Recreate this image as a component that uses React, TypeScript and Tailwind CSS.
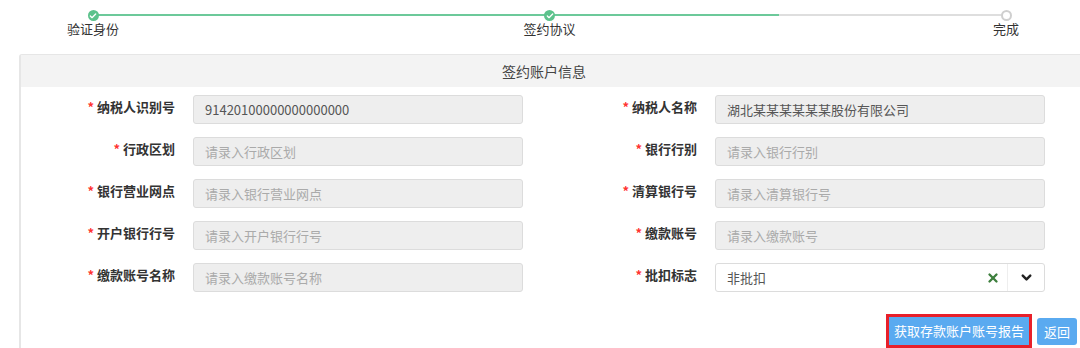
import { X, ChevronDown, Check } from 'lucide-react'

const rows: [string, string, boolean, string, string, boolean][] = [
  ['纳税人识别号', '91420100000000000000', false, '纳税人名称', '湖北某某某某某某股份有限公司', false],
  ['行政区划', '请录入行政区划', true, '银行行别', '请录入银行行别', true],
  ['银行营业网点', '请录入银行营业网点', true, '清算银行号', '请录入清算银行号', true],
  ['开户银行行号', '请录入开户银行行号', true, '缴款账号', '请录入缴款账号', true],
  ['缴款账号名称', '请录入缴款账号名称', true, '批扣标志', '非批扣', false],
]

function Label({ text, w }: { text: string; w: string }) {
  return (
    <div className={`${w} shrink-0 text-right pt-[2px] text-[13px] font-bold text-[#333]`}>
      <span className="text-[#f33] mr-[3px]">*</span>{text}
    </div>
  )
}

function Field({ value, hint }: { value: string; hint: boolean }) {
  return (
    <div className={`ml-[18px] w-[330px] h-[29px] rounded-[3px] border border-[#dcdcdc] bg-[#eeeeee] px-[11px] flex items-center text-[13px] ${hint ? 'text-[#aaa]' : 'text-[#555]'}`}>
      {value}
    </div>
  )
}

function Select() {
  return (
    <div className="ml-[18px] w-[330px] h-[29px] rounded-[3px] border border-[#dcdcdc] bg-white flex items-center text-[13px] text-[#555]">
      <span className="flex-1 pl-[11px]">非批扣</span>
      <X size={14} strokeWidth={4} className="text-[#3d7f3d] mr-[7px]" />
      <div className="h-full w-[37px] border-l border-[#eee] flex items-center justify-center">
        <ChevronDown size={15} strokeWidth={4} className="text-[#222]" />
      </div>
    </div>
  )
}

function Step({ label, state }: { label: string; state: 'done' | 'todo' }) {
  return (
    <div className="w-[60px] flex flex-col items-center relative z-10">
      {state === 'done' ? (
        <div className="mt-[10px] w-[11px] h-[11px] rounded-full bg-[#5cc28c] flex items-center justify-center">
          <Check size={8} strokeWidth={4} className="text-white" />
        </div>
      ) : (
        <div className="mt-[10px] w-[11px] h-[11px] rounded-full border-2 border-[#cfcfcf] bg-white" />
      )}
      <div className="-mt-[1px] text-[13px] text-[#333] whitespace-nowrap leading-[17px]">{label}</div>
    </div>
  )
}

export default function App() {
  return (
    <div className="w-[1080px] h-[348px] overflow-hidden bg-white" style={{ fontFamily: '"Noto Sans CJK SC", "Liberation Sans", sans-serif' }}>
      <div className="relative ml-[63px] w-[973px] h-[54px] flex justify-between items-start">
        <div className="absolute top-[14px] left-[30px] w-[913px] h-[2px] bg-[#dedede]" />
        <div className="absolute top-[14px] left-[30px] w-[686px] h-[2px] bg-[#6cc99a]" />
        <Step label="验证身份" state="done" />
        <Step label="签约协议" state="done" />
        <Step label="完成" state="todo" />
      </div>
      <div className="ml-[19px] w-[1080px] border-l-2 border-t border-[#e6e6e6] rounded-tl-[3px]">
        <div className="h-[32px] bg-[#f3f3f3] flex items-center pl-[481px] text-[14px] text-[#444]">签约账户信息</div>
        <div className="pt-[8px] flex flex-col gap-[13px]">
          {rows.map(r => (
            <div key={r[0]} className="flex">
              <div className="w-[519px] flex">
                <Label text={r[0]} w="w-[154px]" />
                <Field value={r[1]} hint={r[2]} />
              </div>
              <div className="flex">
                <Label text={r[3]} w="w-[157px]" />
                {r[3] === '批扣标志' ? <Select /> : <Field value={r[4]} hint={r[5]} />}
              </div>
            </div>
          ))}
        </div>
        <div className="w-[1056px] flex justify-end items-start pt-[22px] gap-[5px]">
          <div className="border-[3px] border-[#e8202a]">
            <button className="h-[28px] w-[140px] bg-[#5aaaf0] text-white text-[13px] whitespace-nowrap">获取存款账户账号报告</button>
          </div>
          <button className="mt-[4px] h-[27px] w-[40px] rounded-[3px] bg-[#5aaaf0] text-white text-[13px]">返回</button>
        </div>
      </div>
    </div>
  )
}
